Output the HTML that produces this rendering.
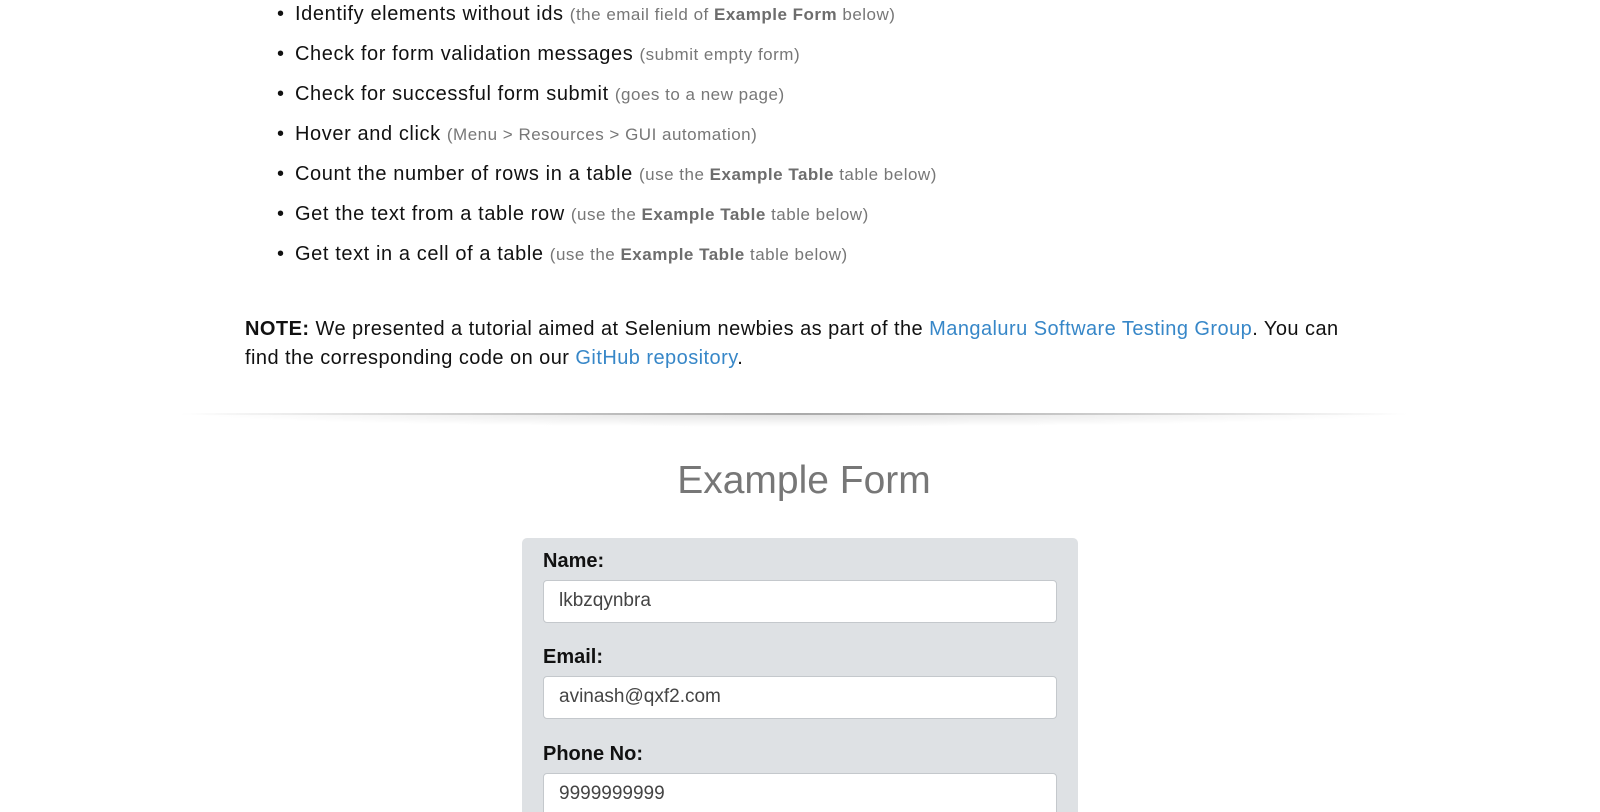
<!DOCTYPE html>
<html><head><meta charset="utf-8"><style>
html,body{margin:0;padding:0;background:#fff;width:1600px;height:812px;max-height:812px;overflow:hidden;font-family:"Liberation Sans",sans-serif;color:#111;position:relative}
.r{position:absolute;left:295px;font-size:20px;line-height:28px;white-space:nowrap;letter-spacing:0.6px}
.bl{position:absolute;left:277px;font-size:20px;line-height:28px}
.g{color:#777;font-size:17px;letter-spacing:0.5px}
.g b{color:#6d6d6d}
.note{position:absolute;left:245px;top:315px;width:1110px;font-size:20px;line-height:29px;letter-spacing:0.45px}
a{color:#3787c8;text-decoration:none}
.div{position:absolute;left:180px;top:413px;width:1228px;height:14px;background:radial-gradient(ellipse at 50% 0%,rgba(0,0,0,.12),rgba(0,0,0,0) 70%)}
.div:before{content:"";position:absolute;left:0;right:0;top:0;height:2px;background:linear-gradient(90deg,rgba(0,0,0,0),#aaa 50%,rgba(0,0,0,0))}
h2{position:absolute;left:0;width:1608px;text-align:center;top:453px;margin:0;font-weight:normal;font-size:39px;color:#777;line-height:56px}
.box{position:absolute;left:522px;top:538px;width:556px;height:274px;background:#dee1e4;border-radius:5px 5px 0 0}
label{position:absolute;left:21px;font-weight:bold;font-size:20px;line-height:24px;color:#111}
.in{position:absolute;left:21px;background:#fff;border:1px solid #c4c8cc;border-radius:4px;font-size:19px;line-height:40px;padding-left:15px;box-sizing:border-box;width:514px;height:43px;color:#444}
</style></head><body>
<span class="bl" style="top:0">•</span>
<span class="bl" style="top:40px">•</span>
<span class="bl" style="top:80px">•</span>
<span class="bl" style="top:120px">•</span>
<span class="bl" style="top:160px">•</span>
<span class="bl" style="top:200px">•</span>
<span class="bl" style="top:240px">•</span>
<div class="r" style="top:0">Identify elements without ids <span class="g">(the email field of <b>Example Form</b> below)</span></div>
<div class="r" style="top:40px">Check for form validation messages <span class="g">(submit empty form)</span></div>
<div class="r" style="top:80px">Check for successful form submit <span class="g">(goes to a new page)</span></div>
<div class="r" style="top:120px">Hover and click <span class="g">(Menu &gt; Resources &gt; GUI automation)</span></div>
<div class="r" style="top:160px">Count the number of rows in a table <span class="g">(use the <b>Example Table</b> table below)</span></div>
<div class="r" style="top:200px">Get the text from a table row <span class="g">(use the <b>Example Table</b> table below)</span></div>
<div class="r" style="top:240px">Get text in a cell of a table <span class="g">(use the <b>Example Table</b> table below)</span></div>
<div class="note"><b>NOTE:</b> We presented a tutorial aimed at Selenium newbies as part of the <a>Mangaluru Software Testing Group</a>. You can find the corresponding code on our <a>GitHub repository</a>.</div>
<div class="div"></div>
<h2>Example Form</h2>
<div class="box">
<label style="top:11px">Name:</label>
<div class="in" style="top:42px">lkbzqynbra</div>
<label style="top:107px">Email:</label>
<div class="in" style="top:138px">avinash@qxf2.com</div>
<label style="top:204px">Phone No:</label>
<div class="in" style="top:235px;height:60px">9999999999</div>
</div>
</body></html>
